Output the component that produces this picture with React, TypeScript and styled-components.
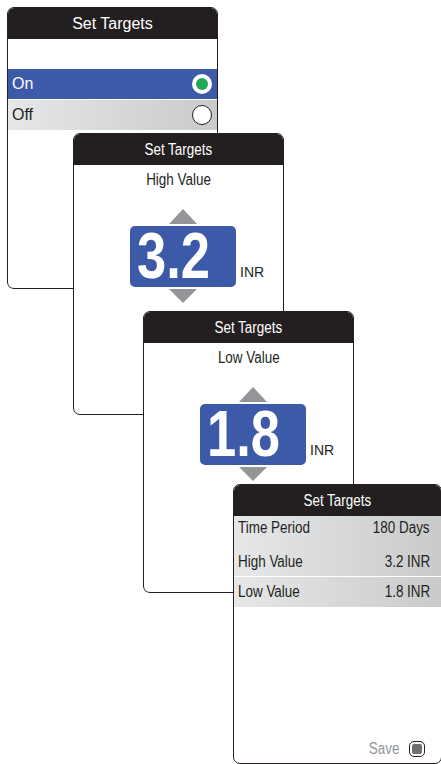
import React from "react";
import styled, { createGlobalStyle } from "styled-components";

const regular = `"Liberation Sans", Arial, sans-serif`;

const GlobalStyle = createGlobalStyle`
  html, body {
    margin: 0;
    padding: 0;
    background: #ffffff;
  }
  body {
    font-family: ${regular};
    color: #231f20;
  }
`;

// no condensed face is installed, so the narrow device type is squeezed
const Narrow = styled.span<{ $origin?: string; $scale?: number }>`
  display: inline-block;
  white-space: nowrap;
  transform: scaleX(${(p) => p.$scale ?? 0.84});
  transform-origin: ${(p) => p.$origin ?? "center"};
`;

// the four device screens overlap like windows, so the canvas places them
const Canvas = styled.div`
  position: relative;
  width: 441px;
  height: 764px;
  overflow: hidden;
  background: #ffffff;
`;

const Screen = styled.div<{ $x: number; $y: number; $w: number; $h: number }>`
  position: absolute;
  left: ${(p) => p.$x}px;
  top: ${(p) => p.$y}px;
  width: ${(p) => p.$w}px;
  height: ${(p) => p.$h}px;
  box-sizing: border-box;
  display: flex;
  flex-direction: column;
  background: #ffffff;
  border: 1.5px solid #231f20;
  border-radius: 7px;
  overflow: hidden;
`;

const Header = styled.div`
  flex: 0 0 31px;
  display: flex;
  align-items: center;
  justify-content: center;
  background: #231f20;
  color: #ffffff;
  font-family: ${regular};
  font-size: 16px;
`;

/* ---------- screen 1: on / off ---------- */

const OptionList = styled.div`
  display: flex;
  flex-direction: column;
  gap: 1px;
  padding-top: 30px;
`;

const OptionRow = styled.div<{ $selected?: boolean }>`
  height: 30px;
  display: flex;
  align-items: center;
  justify-content: space-between;
  padding: 0 5px 0 4px;
  font-family: ${regular};
  font-size: 16px;
  color: ${(p) => (p.$selected ? "#ffffff" : "#231f20")};
  background: ${(p) =>
    p.$selected ? "#3c5aa8" : "linear-gradient(to right, #e6e7e8, #c8cacc)"};
`;

const Radio = styled.span<{ $on?: boolean }>`
  width: 20px;
  height: 20px;
  box-sizing: border-box;
  border-radius: 50%;
  background: #ffffff;
  border: ${(p) => (p.$on ? "none" : "1px solid #231f20")};
  display: flex;
  align-items: center;
  justify-content: center;

  &::after {
    content: "";
    display: ${(p) => (p.$on ? "block" : "none")};
    width: 12px;
    height: 12px;
    border-radius: 50%;
    background: #1faa5a;
  }
`;

/* ---------- screens 2 and 3: value steppers ---------- */

const Prompt = styled.div`
  padding-top: 6px;
  text-align: center;
  font-family: ${regular};
  font-size: 16px;
  line-height: 18px;
  color: #231f20;
`;

const Stepper = styled.div`
  display: grid;
  grid-template-columns: 1fr auto 1fr;
  row-gap: 2px;
  column-gap: 4px;
  padding-left: 9px;
  margin-top: 20px;
`;

const Arrow = styled.div<{ $down?: boolean }>`
  grid-column: 2;
  justify-self: center;
  width: 0;
  height: 0;
  border-left: 14.5px solid transparent;
  border-right: 14.5px solid transparent;
  ${(p) =>
    p.$down
      ? "border-top: 14px solid #939598;"
      : "border-bottom: 15px solid #939598;"}
`;

const ValueBox = styled.div`
  grid-column: 2;
  grid-row: 2;
  width: 106px;
  height: 61px;
  box-sizing: border-box;
  display: flex;
  align-items: center;
  padding-left: 7px;
  border-radius: 5px;
  background: #3c5aa8;
  color: #ffffff;
  font-family: ${regular};
  font-weight: bold;
  font-size: 64px;
  line-height: 61px;
`;

const Unit = styled.div`
  grid-column: 3;
  grid-row: 2;
  align-self: end;
  justify-self: start;
  margin-bottom: 8px;
  font-family: ${regular};
  font-size: 14px;
  line-height: 14px;
  color: #231f20;
`;

/* ---------- screen 4: summary ---------- */

const Summary = styled.div`
  display: flex;
  flex-direction: column;
`;

const SummaryRow = styled.div<{ $h: number; $pt?: number; $divider?: boolean }>`
  height: ${(p) => p.$h}px;
  box-sizing: border-box;
  display: flex;
  align-items: center;
  justify-content: space-between;
  padding: ${(p) => p.$pt ?? 0}px 11px 0 4px;
  border-top: ${(p) => (p.$divider ? "1px solid #ffffff" : "none")};
  background: linear-gradient(to right, #e6e7e8, #c8cacc);
  font-family: ${regular};
  font-size: 16px;
  color: #231f20;
`;

const Footer = styled.div`
  margin-top: auto;
  display: flex;
  justify-content: flex-end;
  align-items: center;
  gap: 10px;
  padding: 0 16px 5px 0;
`;

const SaveLabel = styled.span`
  font-family: ${regular};
  font-size: 16px;
  color: #939598;
`;

const SaveKey = styled.span`
  width: 16px;
  height: 16px;
  box-sizing: border-box;
  padding: 2px;
  border: 1.5px solid #231f20;
  border-radius: 5px;
  background: #ffffff;
  display: flex;

  &::after {
    content: "";
    flex: 1;
    border-radius: 2px;
    background: #6d6e71;
  }
`;

function ValueScreen({
  x,
  y,
  label,
  value,
}: {
  x: number;
  y: number;
  label: string;
  value: string;
}) {
  return (
    <Screen $x={x} $y={y} $w={211} $h={282}>
      <Header>
        <Narrow>Set Targets</Narrow>
      </Header>
      <Prompt>
        <Narrow>{label}</Narrow>
      </Prompt>
      <Stepper>
        <Arrow />
        <ValueBox>
          <Narrow $origin="left" $scale={0.82}>
            {value}
          </Narrow>
        </ValueBox>
        <Unit>INR</Unit>
        <Arrow $down />
      </Stepper>
    </Screen>
  );
}

function SummaryLine({
  label,
  value,
  ...rest
}: {
  label: string;
  value: string;
  $h: number;
  $pt?: number;
  $divider?: boolean;
}) {
  return (
    <SummaryRow {...rest}>
      <Narrow $origin="left">{label}</Narrow>
      <Narrow $origin="right">{value}</Narrow>
    </SummaryRow>
  );
}

export default function App() {
  return (
    <>
      <GlobalStyle />
      <Canvas>
        <Screen $x={7} $y={7} $w={211} $h={282}>
          <Header>Set Targets</Header>
          <OptionList>
            <OptionRow $selected>
              On
              <Radio $on />
            </OptionRow>
            <OptionRow>
              Off
              <Radio />
            </OptionRow>
          </OptionList>
        </Screen>

        <ValueScreen x={73} y={133} label="High Value" value="3.2" />
        <ValueScreen x={143} y={311} label="Low Value" value="1.8" />

        <Screen $x={233} $y={484} $w={209} $h={280}>
          <Header>
            <Narrow>Set Targets</Narrow>
          </Header>
          <Summary>
            <SummaryLine $h={24} label="Time Period" value="180 Days" />
            <SummaryLine $h={36} $pt={8} label="High Value" value="3.2 INR" />
            <SummaryLine $h={31} $divider label="Low Value" value="1.8 INR" />
          </Summary>
          <Footer>
            <SaveLabel>
              <Narrow $origin="right">Save</Narrow>
            </SaveLabel>
            <SaveKey />
          </Footer>
        </Screen>
      </Canvas>
    </>
  );
}
